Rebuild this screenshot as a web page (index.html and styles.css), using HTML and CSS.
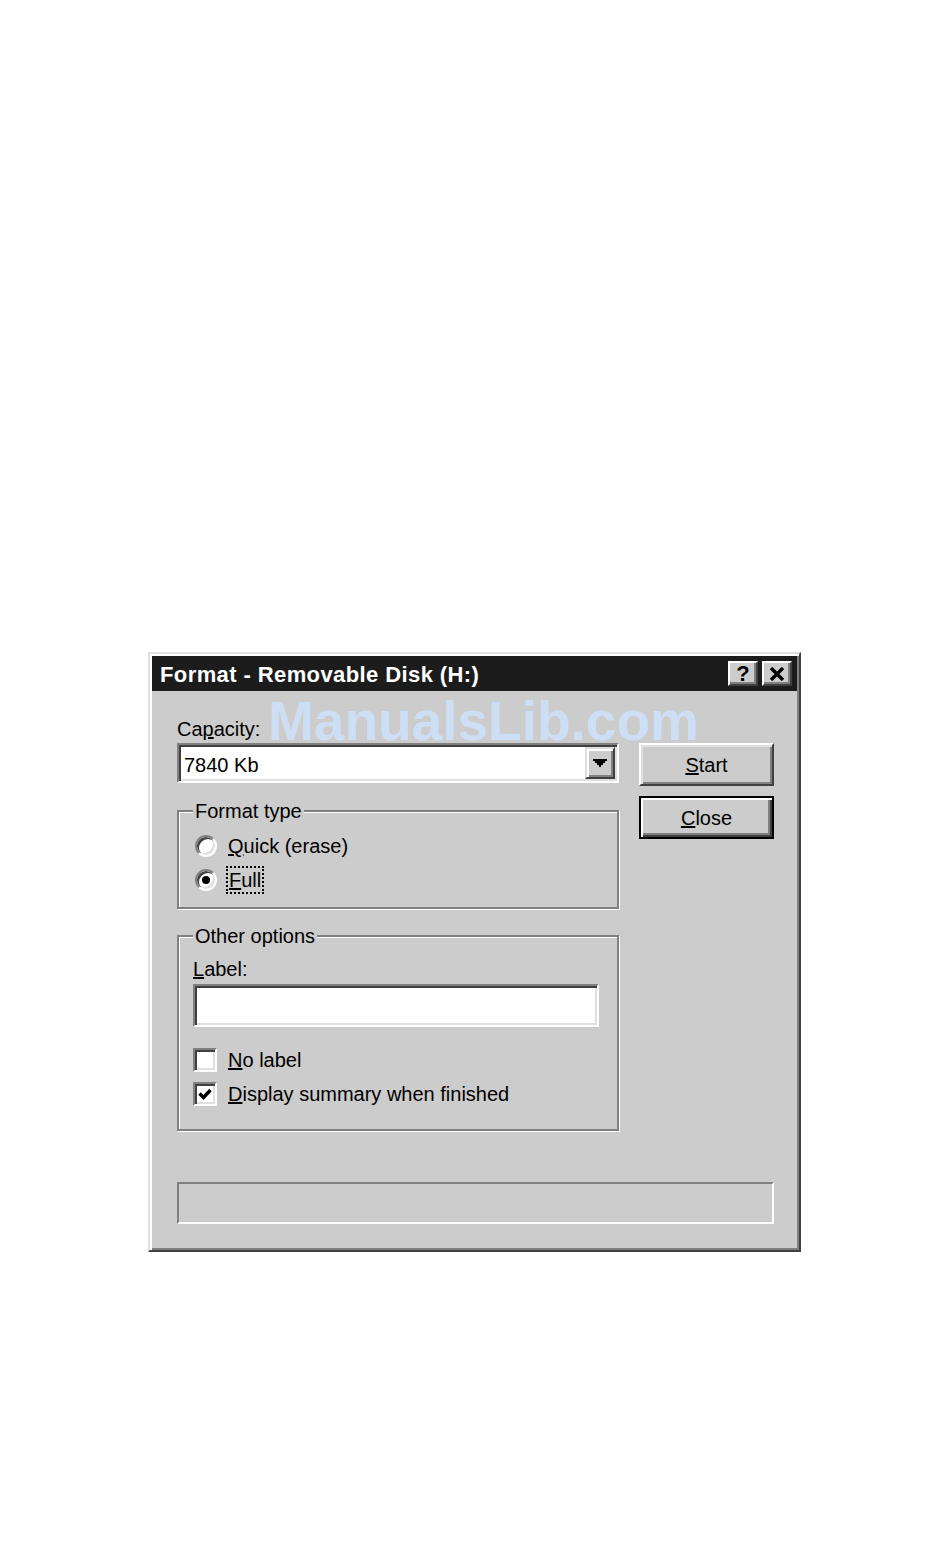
FILE: index.html
```html
<!DOCTYPE html>
<html lang="en">
<head>
    <meta charset="UTF-8">
    <meta name="viewport" content="width=device-width, initial-scale=1.0">
    <title>Format - Removable Disk (H:)</title>
    <link rel="stylesheet" href="styles.css">
</head>
<body>

    <div class="window">
        <div class="titlebar">
            <span class="title">Format - Removable Disk (H:)</span>
            <div class="title-buttons">
                <div class="tbtn tbtn-help">?</div>
                <div class="tbtn">
                    <svg width="16" height="14" viewBox="0 0 16 14">
                        <path d="M2 1 L14 13 M14 1 L2 13" stroke="#000" stroke-width="3.4" fill="none"/>
                    </svg>
                </div>
            </div>
        </div>

        <div class="body">
            <div class="columns">
                <div class="left">
                    <div class="caption">Ca<u>p</u>acity:</div>
                    <div class="combo">
                        <span class="combo-value">7840 Kb</span>
                        <span class="combo-arrow">
                            <svg width="14" height="8" viewBox="0 0 14 8">
                                <path d="M0 0H14V2H12V4H10V6H8V8H6V6H4V4H2V2H0Z" fill="#000"/>
                            </svg>
                        </span>
                    </div>

                    <fieldset class="group group-format">
                        <legend>Format type</legend>
                        <div class="option">
                            <span class="radio"></span>
                            <span><u>Q</u>uick (erase)</span>
                        </div>
                        <div class="option">
                            <span class="radio checked"></span>
                            <span class="focus"><u>F</u>ull</span>
                        </div>
                    </fieldset>

                    <fieldset class="group group-other">
                        <legend>Other options</legend>
                        <div class="caption"><u>L</u>abel:</div>
                        <div class="textbox"></div>
                        <div class="option option-first">
                            <span class="checkbox"></span>
                            <span><u>N</u>o label</span>
                        </div>
                        <div class="option">
                            <span class="checkbox">
                                <svg width="14" height="14" viewBox="0 0 14 14">
                                    <path d="M1.5 6.5 L5.5 10.5 L12.5 3" stroke="#000" stroke-width="3.4" fill="none"/>
                                </svg>
                            </span>
                            <span><u>D</u>isplay summary when finished</span>
                        </div>
                    </fieldset>
                </div>

                <div class="right">
                    <button class="btn"><u>S</u>tart</button>
                    <button class="btn btn-default"><u>C</u>lose</button>
                </div>
            </div>

            <div class="statusbar"></div>
        </div>

        <div class="watermark">ManualsLib.com</div>
    </div>

</body>
</html>
```

FILE: styles.css
```css
* {
    margin: 0;
    padding: 0;
    box-sizing: border-box;
}

body {
    background: #fff;
}

.window {
    position: relative;
    display: flex;
    flex-direction: column;
    width: 653px;
    height: 600px;
    margin: 652px 0 0 148px;
    padding: 2px;
    background: #ccc;
    border: 2px solid;
    border-color: #dfdfdf #404040 #404040 #dfdfdf;
    box-shadow: inset 2px 2px #fff, inset -2px -2px #808080;
    font-family: "Liberation Sans", Arial, sans-serif;
    font-size: 20px;
    line-height: 26px;
    color: #000;
}

/* barra de titulo */
.titlebar {
    display: flex;
    align-items: center;
    justify-content: space-between;
    height: 35px;
    padding: 0 5px 0 8px;
    background: #1c1c1c;
}

.title {
    margin-top: 2px;
    color: #fff;
    font-size: 22px;
    font-weight: bold;
    letter-spacing: 0.4px;
}

.title-buttons {
    display: flex;
    gap: 4px;
}

.tbtn {
    display: flex;
    align-items: center;
    justify-content: center;
    width: 30px;
    height: 25px;
    background: #ccc;
    border: 2px solid;
    border-color: #fff #404040 #404040 #fff;
    box-shadow: inset -2px -2px #808080;
}

.tbtn-help {
    font-size: 22px;
    font-weight: bold;
    line-height: 20px;
}

/* conteudo */
.body {
    flex: 1;
    display: flex;
    flex-direction: column;
    padding: 25px 23px 24px 25px;
}

.columns {
    display: flex;
    gap: 20px;
}

.left {
    width: 442px;
}

.right {
    display: flex;
    flex-direction: column;
    gap: 10px;
    width: 135px;
    padding-top: 27px;
}

.caption {
    margin-bottom: 1px;
}

.combo {
    display: flex;
    height: 40px;
    padding: 2px;
    background: #fff;
    border: 2px solid;
    border-color: #808080 #fff #fff #808080;
    box-shadow: inset 2px 2px #404040, inset -2px -2px #dfdfdf;
}

.combo-value {
    padding: 4px 0 0 3px;
    line-height: 28px;
}

.combo-arrow {
    display: flex;
    align-items: center;
    justify-content: center;
    width: 30px;
    height: 32px;
    margin-left: auto;
    background: #ccc;
    border: 2px solid;
    border-color: #dfdfdf #404040 #404040 #dfdfdf;
    box-shadow: inset 2px 2px #fff, inset -2px -2px #808080;
}

/* grupos */
.group {
    min-inline-size: 0;
    margin: 15px 0 0;
    padding: 5px 18px 10px 14px;
    border: 2px solid #808080;
    box-shadow: inset 1px 1px #fff, 1px 1px #fff;
}

.group legend {
    padding: 0 2px;
    background: #ccc;
    line-height: 26px;
}

.group-other {
    margin-top: 14px;
    padding-top: 7px;
    padding-bottom: 18px;
}

.group-other .caption {
    margin-bottom: 2px;
}

.option {
    display: flex;
    align-items: center;
    gap: 11px;
    height: 34px;
}

.option-first {
    margin-top: 16px;
}

.radio {
    display: flex;
    align-items: center;
    justify-content: center;
    width: 22px;
    height: 22px;
    margin-left: 2px;
    border-radius: 50%;
    background: #fff;
    border: 2px solid;
    border-color: #808080 #fff #fff #808080;
    box-shadow: inset 2px 2px #404040, inset -2px -2px #dfdfdf;
}

.radio.checked::after {
    content: "";
    width: 8px;
    height: 8px;
    border-radius: 50%;
    background: #000;
}

.focus {
    padding: 0 1px;
    line-height: 24px;
    outline: 2px dotted #000;
}

.checkbox {
    display: flex;
    align-items: center;
    justify-content: center;
    width: 24px;
    height: 24px;
    background: #fff;
    border: 2px solid;
    border-color: #808080 #fff #fff #808080;
    box-shadow: inset 2px 2px #404040, inset -2px -2px #dfdfdf;
}

.textbox {
    height: 43px;
    background: #fff;
    border: 2px solid;
    border-color: #808080 #fff #fff #808080;
    box-shadow: inset 2px 2px #404040, inset -2px -2px #dfdfdf;
}

/* botoes */
.btn {
    width: 135px;
    height: 43px;
    font: inherit;
    color: #000;
    background: #ccc;
    border: 2px solid;
    border-color: #fff #404040 #404040 #fff;
    box-shadow: inset 2px 2px #dfdfdf, inset -2px -2px #808080;
}

.btn-default {
    border-color: #000;
    box-shadow: inset 2px 2px #fff, inset -2px -2px #404040, inset -4px -4px #808080;
}

.statusbar {
    height: 42px;
    margin-top: auto;
    border: 2px solid;
    border-color: #808080 #fff #fff #808080;
}

.watermark {
    position: absolute;
    top: 40px;
    left: 118px;
    font-size: 55px;
    font-weight: bold;
    line-height: 55px;
    color: #cddff4;
    pointer-events: none;
}
```
